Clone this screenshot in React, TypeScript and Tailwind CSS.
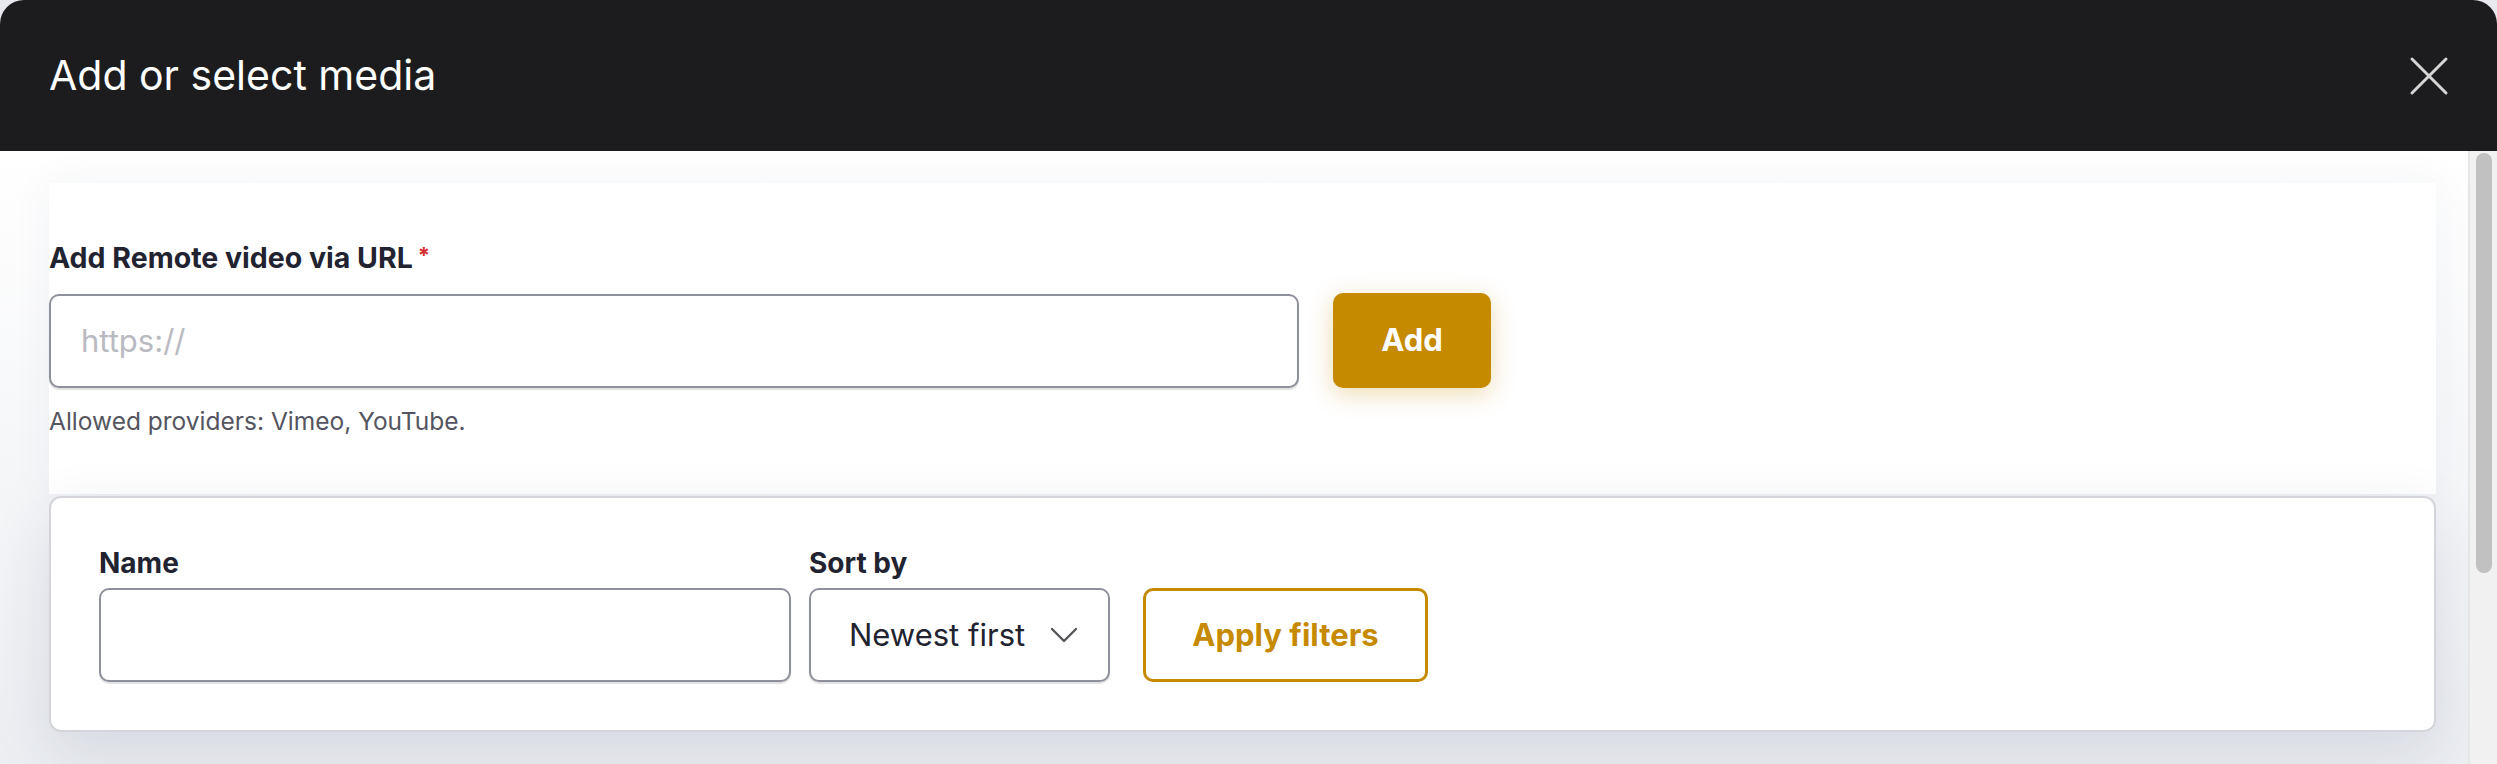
function CloseIcon() {
  return (
    <svg width="40" height="40" viewBox="0 0 40 40" fill="none" className="shrink-0">
      <path d="M3 3 37 37M37 3 3 37" stroke="#d6d6d6" strokeWidth="3" strokeLinecap="round" />
    </svg>
  )
}

function Chevron() {
  return (
    <svg width="28" height="16" viewBox="0 0 28 16" fill="none" className="shrink-0">
      <path d="M2 2 14 14 26 2" stroke="#55565b" strokeWidth="2.4" strokeLinecap="round" strokeLinejoin="round" />
    </svg>
  )
}

const inputCls =
  'h-[94px] rounded-[10px] border-2 border-[#8e919b] bg-white shadow-[0_2px_1px_rgba(0,0,0,0.12)] outline-none'

export default function App() {
  return (
    <div className="h-[764px] w-[2497px] overflow-hidden bg-[#e8e9ee] font-['Inter',sans-serif] text-[#222330]">
      <div className="flex h-full flex-col overflow-hidden rounded-t-[24px] bg-white">
        <header className="flex h-[151px] shrink-0 items-center justify-between bg-[#1c1c1e] pl-[49px] pr-[48px]">
          <h1 className="text-[41px] leading-none font-normal text-white">Add or select media</h1>
          <CloseIcon />
        </header>

        <div className="flex min-h-0 flex-1">
          <main className="min-w-0 flex-1 bg-gradient-to-b from-white to-[#eceef2] pr-[32px] pl-[49px] pt-[32px]">
            {/* remote url form */}
            <section className="bg-white pt-[60px] pb-[57px] shadow-[0_0_40px_rgba(40,50,90,0.05)]">
              <label className="flex items-start text-[28.5px] leading-[30px] font-bold">
                Add Remote video via URL
                <span className="ml-[5px] text-[22px] leading-[24px] text-[#d32f2f]">*</span>
              </label>
              <div className="mt-[20px] flex items-center gap-[34px]">
                <input
                  placeholder="https://"
                  className={`${inputCls} w-[1250px] px-[30px] text-[31px] placeholder:text-[#b9bac1]`}
                />
                <button className="h-[95px] w-[158px] rounded-[10px] bg-[#c68a00] text-[31px] font-bold text-white shadow-[0_6px_24px_rgba(198,138,0,0.3)]">
                  Add
                </button>
              </div>
              <p className="mt-[17px] text-[24.5px] leading-[32px] text-[#545560]">
                Allowed providers: Vimeo, YouTube.
              </p>
            </section>

            {/* filters */}
            <section className="mt-[2px] rounded-[12px] border-2 border-[#d4d5da] bg-white pt-[50px] pr-[48px] pb-[48px] pl-[48px] shadow-[0_20px_60px_rgba(40,50,90,0.12)]">
              <div className="flex items-end">
                <div className="flex flex-col">
                  <label className="text-[28px] leading-[30px] font-bold">Name</label>
                  <input className={`${inputCls} mt-[10px] w-[692px] px-[30px] text-[31px]`} />
                </div>
                <div className="ml-[18px] flex flex-col">
                  <label className="text-[28px] leading-[30px] font-bold">Sort by</label>
                  <div className={`${inputCls} mt-[10px] flex w-[301px] items-center justify-between pr-[30px] pl-[38px]`}>
                    <span className="text-[31px]">Newest first</span>
                    <Chevron />
                  </div>
                </div>
                <button className="ml-[33px] h-[94px] w-[285px] rounded-[10px] border-[3px] border-[#c68a00] bg-white text-[31px] font-bold text-[#c68a00]">
                  Apply filters
                </button>
              </div>
            </section>
          </main>

          <div className="w-[29px] shrink-0 border-l-2 border-[#e6e6e6] bg-[#f1f1f1] pt-[2px]">
            <div className="mx-auto h-[420px] w-[16px] rounded-full bg-[#c1c1c1]" />
          </div>
        </div>
      </div>
    </div>
  )
}
